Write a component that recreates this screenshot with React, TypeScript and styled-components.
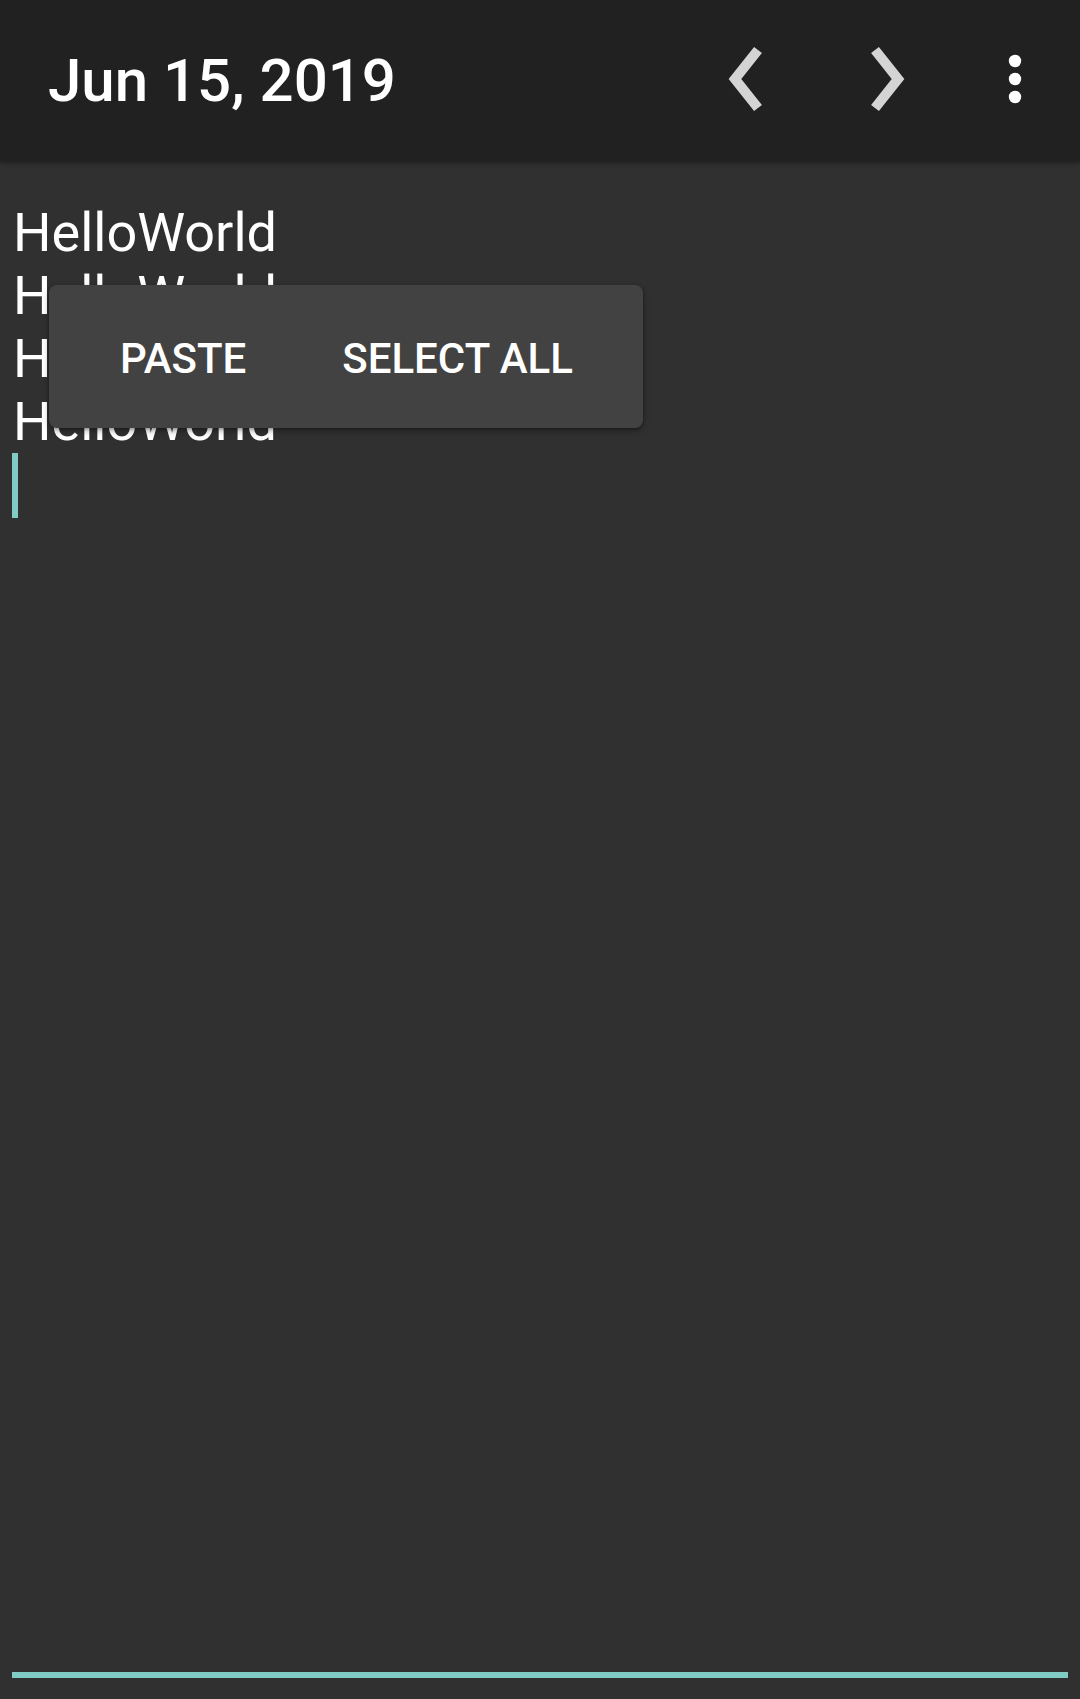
import React from 'react';
import styled, { createGlobalStyle } from 'styled-components';

const GlobalStyle = createGlobalStyle`
  html, body {
    margin: 0;
    padding: 0;
    background: #303030;
  }
  body {
    font-family: Roboto, "Noto Sans", sans-serif;
    -webkit-font-smoothing: antialiased;
  }
`;

const Screen = styled.div`
  position: relative;
  width: 1080px;
  height: 1699px;
  display: flex;
  flex-direction: column;
  background: #303030;
  overflow: hidden;
`;

const Toolbar = styled.header`
  height: 162px;
  flex: none;
  display: flex;
  align-items: center;
  padding: 0 10px 0 48px;
  background: #212121;
  box-shadow: 0 2px 4px rgba(0, 0, 0, 0.25);
  position: relative;
  z-index: 1;
`;

const Title = styled.h1`
  flex: 1;
  margin: 0;
  font-family: Roboto, sans-serif;
  font-weight: 500;
  font-size: 60px;
  color: #ffffff;
  line-height: 1;
`;

const IconButton = styled.button<{ $w: number }>`
  width: ${({ $w }) => $w}px;
  height: 162px;
  padding: 0;
  border: none;
  background: transparent;
  display: flex;
  align-items: center;
  justify-content: center;

  svg {
    display: block;
  }
`;

const Editor = styled.div`
  flex: 1;
  display: flex;
  flex-direction: column;
  padding: 39px 12px 21px;
`;

const Lines = styled.div`
  flex: 1;
  padding-left: 1px;
  font-family: Roboto, sans-serif;
  font-size: 54px;
  line-height: 63px;
  color: #ffffff;
`;

const Line = styled.div`
  white-space: pre;
  height: 63px;
`;

const Cursor = styled.div`
  width: 6px;
  height: 65px;
  margin-left: -1px;
  background: #80cbc4;
`;

const Underline = styled.div`
  height: 6px;
  background: #80cbc4;
`;

const FloatingToolbar = styled.div`
  position: absolute;
  left: 49px;
  top: 285px;
  width: 594px;
  height: 143px;
  box-sizing: border-box;
  padding: 4px 23px 0;
  display: flex;
  align-items: center;
  background: #424242;
  border-radius: 8px;
  box-shadow: 0 3px 6px rgba(0, 0, 0, 0.3), 0 1px 3px rgba(0, 0, 0, 0.25);
  z-index: 2;
`;

const MenuAction = styled.button`
  height: 100%;
  padding: 0 48px;
  border: none;
  background: transparent;
  font-family: Roboto, sans-serif;
  font-weight: 500;
  font-size: 42px;
  color: #ffffff;
  white-space: nowrap;
`;

const ChevronLeft = () => (
  <svg width="144" height="162" viewBox="0 0 144 162">
    <polyline points="86,50 63,79 86,108" fill="none" stroke="#d4d4d4" strokeWidth="10" />
  </svg>
);

const ChevronRight = () => (
  <svg width="144" height="162" viewBox="0 0 144 162">
    <polyline points="59,50 82,79 59,108" fill="none" stroke="#d4d4d4" strokeWidth="10" />
  </svg>
);

const Overflow = () => (
  <svg width="110" height="162" viewBox="0 0 110 162">
    <circle cx="55" cy="61" r="6.2" fill="#ffffff" />
    <circle cx="55" cy="79" r="6.2" fill="#ffffff" />
    <circle cx="55" cy="97" r="6.2" fill="#ffffff" />
  </svg>
);

const lines = ['HelloWorld', 'HelloWorld', 'HelloWorld', 'HelloWorld'];

export default function App() {
  return (
    <>
      <GlobalStyle />
      <Screen>
        <Toolbar>
          <Title>Jun 15, 2019</Title>
          <IconButton $w={144} aria-label="Previous day">
            <ChevronLeft />
          </IconButton>
          <IconButton $w={144} aria-label="Next day">
            <ChevronRight />
          </IconButton>
          <IconButton $w={110} aria-label="More options">
            <Overflow />
          </IconButton>
        </Toolbar>
        <Editor>
          <Lines>
            {lines.map((l, i) => (
              <Line key={i}>{l}</Line>
            ))}
            <Cursor />
          </Lines>
          <Underline />
        </Editor>
        <FloatingToolbar>
          <MenuAction>PASTE</MenuAction>
          <MenuAction>SELECT ALL</MenuAction>
        </FloatingToolbar>
      </Screen>
    </>
  );
}
